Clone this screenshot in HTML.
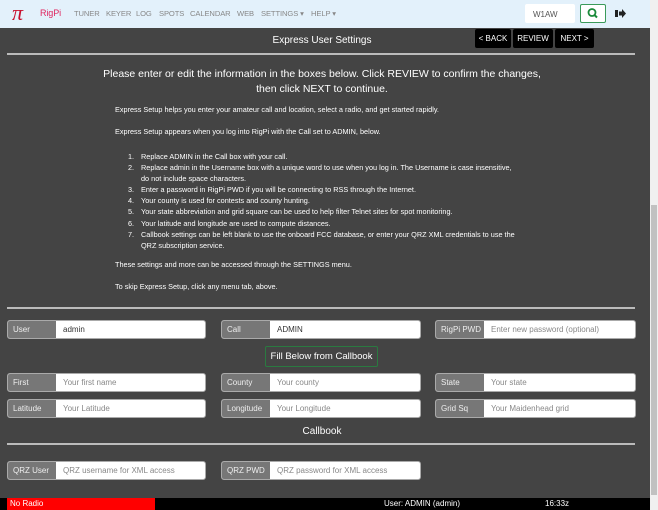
<!DOCTYPE html>
<html><head><style>
*{box-sizing:border-box;margin:0;padding:0}
body{width:658px;height:510px;overflow:hidden;background:#444;font-family:"Liberation Sans",sans-serif;position:relative;color:#fff}
.nav{position:absolute;left:0;top:0;width:650px;height:28px;background:#e3f1fb}
.nav span{position:absolute;top:9px;font-size:7.6px;color:#888;letter-spacing:-0.1px}
.abs{position:absolute}
.btn{position:absolute;top:29px;height:19px;background:#000;color:#fff;font-size:8px;text-align:center;line-height:19px;border-radius:2px}
.hr{position:absolute;left:7px;width:628px;height:2px;background:#bbb}
.c{position:absolute;left:0;width:650px;text-align:center}
.p{position:absolute;font-size:7.3px;color:#fff;white-space:nowrap}
.grp{position:absolute;height:19px;background:#fff;border-radius:3px;border:1px solid #aaa;overflow:hidden}
.grp b{position:absolute;left:0;top:0;bottom:0;width:48px;background:#777;color:#eee;font-weight:normal;font-size:8px;line-height:17px;padding-left:5px}
.grp i{position:absolute;left:55px;top:0;font-style:normal;font-size:8px;line-height:17px;color:#888}
</style></head><body>
<div class="nav">
<div class="abs" style="left:12px;top:2px;font-size:22px;color:#c8102e;font-family:'Liberation Serif',serif;font-style:italic;line-height:22px">π</div>
<span style="left:40px;color:#e0245e;font-size:9px;top:8px">RigPi</span>
<span style="left:74px">TUNER</span><span style="left:106px">KEYER</span><span style="left:136px">LOG</span><span style="left:159px">SPOTS</span><span style="left:190px">CALENDAR</span><span style="left:237px">WEB</span><span style="left:261px">SETTINGS ▾</span><span style="left:311px">HELP ▾</span>
<div class="abs" style="left:525px;top:4px;width:50px;height:19px;background:#fff;border-radius:2px;font-size:8px;color:#555;padding:6px 0 0 8px">W1AW</div>
<div class="abs" style="left:580px;top:4px;width:26px;height:19px;border:1px solid #3a9a5a;border-radius:2px;background:#fff">
<svg width="24" height="17" viewBox="0 0 24 17"><circle cx="11" cy="7.5" r="3.5" fill="none" stroke="#1a8a3a" stroke-width="1.8"/><line x1="13.5" y1="10" x2="16" y2="12.5" stroke="#1a8a3a" stroke-width="2"/></svg></div>
<svg class="abs" style="left:614px;top:8px" width="12" height="11" viewBox="0 0 12 11"><path d="M1 2h3v7H1z" fill="#222"/><path d="M5 3.5h3V1l4 4.5-4 4.5V7.5H5z" fill="#222"/></svg>
</div>
<div class="abs" style="left:650px;top:0;width:8px;height:510px;background:#f0f0f0"></div>
<div class="abs" style="left:651px;top:205px;width:6px;height:290px;background:#c1c1c1"></div>

<div class="c" style="top:35px;font-size:10px;left:-3px">Express User Settings</div>
<div class="btn" style="left:475px;width:36px">&lt; BACK</div>
<div class="btn" style="left:513px;width:40px">REVIEW</div>
<div class="btn" style="left:555px;width:39px">NEXT &gt;</div>
<div class="hr" style="top:53px"></div>

<div class="c" style="top:67px;font-size:10.5px;line-height:15px;left:-3px">Please enter or edit the information in the boxes below. Click REVIEW to confirm the changes,<br>then click NEXT to continue.</div>
<div class="p" style="left:115px;top:105px">Express Setup helps you enter your amateur call and location, select a radio, and get started rapidly.</div>
<div class="p" style="left:115px;top:127px">Express Setup appears when you log into RigPi with the Call set to ADMIN, below.</div>
<div class="p" style="left:128px;top:151px;line-height:11.1px">1.<br>2.<br><br>3.<br>4.<br>5.<br>6.<br>7.</div>
<div class="p" style="left:141px;top:151px;line-height:11.1px">Replace ADMIN in the Call box with your call.<br>Replace admin in the Username box with a unique word to use when you log in. The Username is case insensitive,<br>do not include space characters.<br>Enter a password in RigPi PWD if you will be connecting to RSS through the Internet.<br>Your county is used for contests and county hunting.<br>Your state abbreviation and grid square can be used to help filter Telnet sites for spot monitoring.<br>Your latitude and longitude are used to compute distances.<br>Callbook settings can be left blank to use the onboard FCC database, or enter your QRZ XML credentials to use the<br>QRZ subscription service.</div>
<div class="p" style="left:115px;top:260px">These settings and more can be accessed through the SETTINGS menu.</div>
<div class="p" style="left:115px;top:282px">To skip Express Setup, click any menu tab, above.</div>
<div class="hr" style="top:307px"></div>

<div class="grp" style="left:7px;top:320px;width:199px"><b>User</b><i style="color:#333">admin</i></div>
<div class="grp" style="left:221px;top:320px;width:200px"><b>Call</b><i style="color:#333">ADMIN</i></div>
<div class="grp" style="left:435px;top:320px;width:201px"><b>RigPi PWD</b><i>Enter new password (optional)</i></div>
<div class="abs" style="left:265px;top:346px;width:113px;height:21px;border:1px solid #2a7a40;border-radius:2px;font-size:9.5px;text-align:center;line-height:19px">Fill Below from Callbook</div>
<div class="grp" style="left:7px;top:373px;width:199px"><b>First</b><i>Your first name</i></div>
<div class="grp" style="left:221px;top:373px;width:200px"><b>County</b><i>Your county</i></div>
<div class="grp" style="left:435px;top:373px;width:201px"><b>State</b><i>Your state</i></div>
<div class="grp" style="left:7px;top:399px;width:199px"><b>Latitude</b><i>Your Latitude</i></div>
<div class="grp" style="left:221px;top:399px;width:200px"><b>Longitude</b><i>Your Longitude</i></div>
<div class="grp" style="left:435px;top:399px;width:201px"><b>Grid Sq</b><i>Your Maidenhead grid</i></div>
<div class="c" style="top:426px;font-size:10px;left:-3px">Callbook</div>
<div class="hr" style="top:443px"></div>
<div class="grp" style="left:7px;top:461px;width:199px"><b>QRZ User</b><i>QRZ username for XML access</i></div>
<div class="grp" style="left:221px;top:461px;width:200px"><b>QRZ PWD</b><i>QRZ password for XML access</i></div>

<div class="abs" style="left:0;top:498px;width:650px;height:12px;background:#000;font-size:8px;line-height:12px">
<div class="abs" style="left:7px;top:0;width:148px;height:12px;background:#f00;padding-left:3px">No Radio</div>
<div class="abs" style="left:384px">User: ADMIN (admin)</div>
<div class="abs" style="left:545px">16:33z</div>
</div>
</body></html>
